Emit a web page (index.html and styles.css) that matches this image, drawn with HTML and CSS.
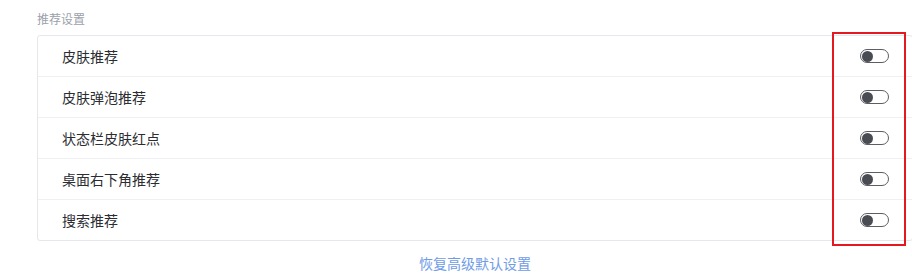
FILE: index.html
```html
<!DOCTYPE html>
<html lang="zh">
<head>
<meta charset="utf-8">
<link rel="stylesheet" href="styles.css">
</head>
<body>
<div class="page">
  <div class="section-title">推荐设置</div>
  <div class="card">
    <div class="row"><span class="label">皮肤推荐</span><span class="toggle"><span class="knob"></span></span></div>
    <div class="row"><span class="label">皮肤弹泡推荐</span><span class="toggle"><span class="knob"></span></span></div>
    <div class="row"><span class="label">状态栏皮肤红点</span><span class="toggle"><span class="knob"></span></span></div>
    <div class="row"><span class="label">桌面右下角推荐</span><span class="toggle"><span class="knob"></span></span></div>
    <div class="row"><span class="label">搜索推荐</span><span class="toggle"><span class="knob"></span></span></div>
  </div>
  <div class="restore"><a class="restore-link">恢复高级默认设置</a></div>
  <div class="highlight"></div>
</div>
</body>
</html>
```
FILE: styles.css
```css
html, body {
  margin: 0;
  padding: 0;
  background: #ffffff;
  overflow: hidden;
}
body {
  font-family: "Noto Sans CJK SC", "Noto Sans", sans-serif;
  width: 912px;
  height: 279px;
}
.page {
  position: relative;
  padding: 9px 0 0 37px;
  margin-right: -1px;
}
.section-title {
  font-size: 12px;
  line-height: 20px;
  color: #9ba1ab;
  margin-bottom: 6px;
}
.card {
  border: 1px solid #e5e7ec;
  border-radius: 3px;
  background: #fff;
}
.row {
  height: 40px;
  display: flex;
  align-items: center;
  justify-content: space-between;
  padding: 0 23px 0 24px;
}
.row + .row {
  border-top: 1px solid #eef0f4;
}
.label {
  font-size: 14px;
  color: #2b2d33;
}
.toggle {
  width: 25px;
  height: 12px;
  border: 1.5px solid #5c5e64;
  border-radius: 8px;
  display: flex;
  align-items: center;
  padding: 0 1px;
}
.knob {
  width: 11px;
  height: 11px;
  border-radius: 50%;
  background: #4a4c54;
}
.restore {
  margin-top: 11px;
  text-align: center;
  line-height: 20px;
}
.restore-link {
  font-size: 14px;
  color: #709ce6;
}
.highlight {
  position: absolute;
  left: 832px;
  top: 32px;
  width: 70px;
  height: 210px;
  border: 2px solid #e5181f;
}
```
